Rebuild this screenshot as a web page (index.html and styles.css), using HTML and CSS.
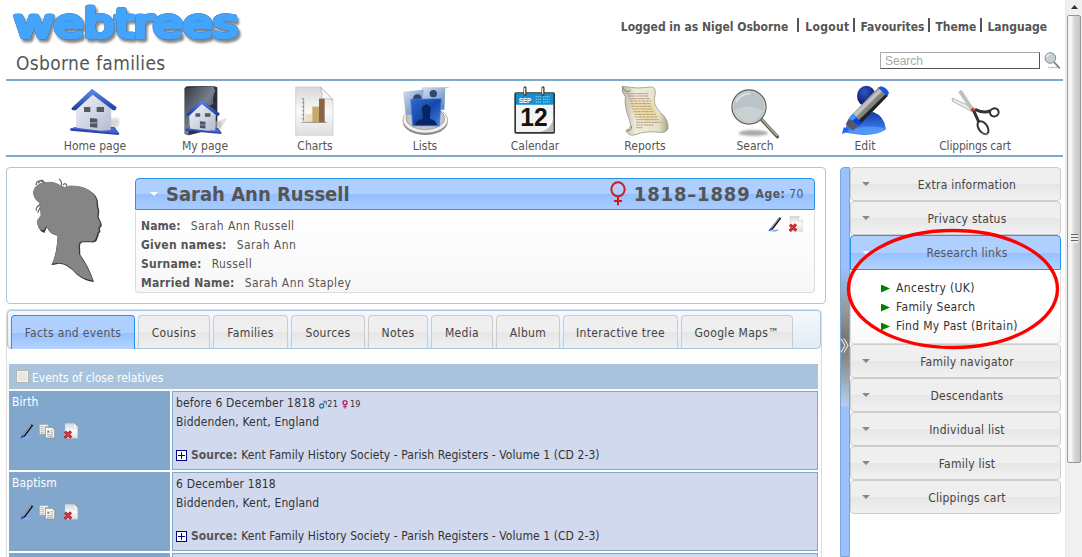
FILE: index.html
```html
<!DOCTYPE html>
<html lang="en">
<head>
<meta charset="utf-8">
<title>Sarah Ann Russell - Osborne families</title>
<link rel="stylesheet" href="styles.css">
</head>
<body>
<svg class="defs" width="0" height="0">
  <defs>
    <linearGradient id="roof" x1="0" y1="0" x2="0" y2="1"><stop offset="0" stop-color="#5f8ff5"/><stop offset="1" stop-color="#1c3aa0"/></linearGradient>
    <linearGradient id="wall" x1="0" y1="0" x2="1" y2="1"><stop offset="0" stop-color="#f2f4fb"/><stop offset="1" stop-color="#b4bccf"/></linearGradient>
    <linearGradient id="dark" x1="0" y1="0" x2="1" y2="1"><stop offset="0" stop-color="#33373f"/><stop offset=".5" stop-color="#77808e"/><stop offset="1" stop-color="#22252b"/></linearGradient>
    <linearGradient id="paper" x1="0" y1="0" x2="0" y2="1"><stop offset="0" stop-color="#d6d6d6"/><stop offset=".5" stop-color="#fafafa"/><stop offset="1" stop-color="#dedede"/></linearGradient>
    <linearGradient id="glass" x1="0" y1="0" x2="1" y2="1"><stop offset="0" stop-color="#2f6ad0"/><stop offset=".5" stop-color="#1748a8"/><stop offset="1" stop-color="#3f86e6"/></linearGradient>
    <linearGradient id="pane" x1="0" y1="0" x2="1" y2="1"><stop offset="0" stop-color="#d5e2f2"/><stop offset="1" stop-color="#4f76b4"/></linearGradient>
    <linearGradient id="scroll" x1="0" y1="0" x2="1" y2="0"><stop offset="0" stop-color="#b9b79c"/><stop offset=".3" stop-color="#efeddb"/><stop offset=".8" stop-color="#e4e1c8"/><stop offset="1" stop-color="#a5a388"/></linearGradient>
    <linearGradient id="barrel" x1="0" y1="0" x2="1" y2="1"><stop offset="0" stop-color="#777"/><stop offset=".4" stop-color="#999"/><stop offset="1" stop-color="#222"/></linearGradient>
    <radialGradient id="head" cx=".4" cy=".3" r=".7"><stop offset="0" stop-color="#3555c8"/><stop offset="1" stop-color="#07125c"/></radialGradient>
    <linearGradient id="suit" x1="0" y1="0" x2="0" y2="1"><stop offset="0" stop-color="#1238a8"/><stop offset="1" stop-color="#4c93ff"/></linearGradient>
    <filter id="soft3" x="-20%" y="-50%" width="140%" height="200%"><feGaussianBlur stdDeviation="3"/></filter>
    <symbol id="house" viewBox="75 18 180 165">
      <path d="M200 120L238 122L236 144L205 165Z" fill="#bbb" opacity=".6" filter="url(#soft3)"/>
      <path d="M90 152L130 140L224 148L237 166L236 171L92 158Z" fill="#2942ac"/>
      <path d="M90 152L130 141L224 150L237 166Z" fill="#4964c4"/>
      <path d="M107 92L157 48L214 92L212 156L182 158L109 149Z" fill="url(#wall)"/>
      <path d="M95 91L156 34L229 88L226 96L219 96L158 49L107 96L97 96Z" fill="url(#roof)" stroke="#26419c" stroke-width="1.5"/>
      <path d="M132 87h19v15h-19zM170 87h22v15h-22z" fill="#515a66"/>
      <path d="M150 120l22 2v27l-22-2z" fill="#4b5666"/><path d="M150 132h22v5h-22z" fill="#8793a5"/>
    </symbol>
    <symbol id="pen" viewBox="0 0 48 48">
      <path d="M10 46Q24 38 38 42L24 47Z" fill="#8fadf0"/>
      <path d="M11 36L37 4l6 3L17 41z" fill="#0a0e18"/><path d="M11 36L35 6l3 1L14 38z" fill="#a5adb8"/>
      <path d="M4 46l6-10 7 5z" fill="#173fd0"/>
    </symbol>
    <symbol id="copy" viewBox="0 0 48 48">
      <path d="M1 4h27v30H1z" fill="#efefef" stroke="#999" stroke-width="2"/><path d="M5 11h9m-9 6h9m-9 6h9m-9 6h9M18 11h8" stroke="#999" stroke-width="2"/>
      <path d="M19 13h20l8 7v25H19z" fill="#f8f8f8" stroke="#8b8b8b" stroke-width="2.5"/><path d="M25 23h6v6h-6z" fill="#777"/><path d="M35 23h7m-7 6h7m-18 6h18m-18 5h18" stroke="#888" stroke-width="2"/>
    </symbol>
    <symbol id="delete" viewBox="0 0 48 48">
      <path d="M6 1h27l11 11v34H6z" fill="url(#paper)" stroke="#c2c2c2" stroke-width="1"/><path d="M32 1v13h12" fill="#fff" stroke="#aaa" stroke-width="1"/>
      <path d="M6 26L25 44M24 25L5 45" stroke="#b02630" stroke-width="9"/><path d="M8 27L23 42M22 27L7 43" stroke="#e03339" stroke-width="4"/>
    </symbol>
  </defs>
</svg>

<div class="window">
<div class="page">
  <header class="header">
    <div class="brand">
      <svg class="logo" viewBox="0 0 248 47" width="248" height="47">
        <defs><linearGradient id="logo" gradientUnits="userSpaceOnUse" x1="0" y1="2" x2="0" y2="40"><stop offset="0" stop-color="#58b4ff"/><stop offset=".6" stop-color="#3f9ffa"/><stop offset="1" stop-color="#2e8aec"/></linearGradient></defs>
        <text class="logo-text" x="14" y="37" textLength="224" lengthAdjust="spacingAndGlyphs">webtrees</text>
      </svg>
      <div class="site-title">Osborne families</div>
    </div>
    <div class="header-right">
      <ul class="user-menu"><li>Logged in as Nigel Osborne</li><li class="logout">Logout</li><li>Favourites</li><li>Theme</li><li>Language</li></ul>
      <div class="search">
        <input class="search-input" type="text" placeholder="Search">
        <svg width="17" height="18" viewBox="0 0 51 54"><path d="M10 44h30v5H12z" fill="#ccc"/><path d="M30 30L47 49" stroke="#77776e" stroke-width="5"/><circle cx="19" cy="18" r="16" fill="#c3cdd2" stroke="#8d9191" stroke-width="3"/><path d="M8 17a12 12 0 0 1 12-10" stroke="#edf2f4" stroke-width="4" fill="none"/></svg>
      </div>
    </div>
  </header>

  <nav class="main-menu">
    <a class="menu-item"><svg class="menu-icon"><use href="#house"/></svg><span>Home page</span></a>
    <a class="menu-item"><svg class="menu-icon" viewBox="405 18 180 165"><path d="M434 30L440 25L520 24L532 28V150L446 172L434 168Z" fill="#2b2e35"/><path d="M434 30L520 24L526 40Q516 58 520 78L470 100L446 150V172L434 168Z" fill="url(#dark)"/><path d="M530 130l32-10-22 35z" fill="#ccc" opacity=".6"/><svg x="424" y="54" width="134" height="123" viewBox="75 18 180 165"><use href="#house" x="75" y="18" width="180" height="165"/></svg></svg><span>My page</span></a>
    <a class="menu-item"><svg class="menu-icon" viewBox="735 18 180 165"><path d="M767 27H842L879 65V172H767Z" fill="url(#paper)" stroke="#bbb" stroke-width="1.5"/><path d="M842 27Q850 48 844 63Q864 60 879 66Z" fill="#f8f8f8" stroke="#aaa" stroke-width="2"/><path d="M797 109h20v24h-20z" fill="#e6e0c6"/><path d="M817 86h20v47h-20z" fill="#c7a96a"/><path d="M837 62h17v71h-17z" fill="#8a6548"/><path d="M791 61v68M785 62h6m-6 12h6m-6 12h6m-6 12h6m-6 12h6m-6 12h6M785 133h76" stroke="#776a60" stroke-width="2"/></svg><span>Charts</span></a>
    <a class="menu-item"><svg class="menu-icon" viewBox="45 18 180 165"><ellipse cx="136" cy="132" rx="67" ry="39" fill="#898989"/><ellipse cx="136" cy="126" rx="67" ry="39" fill="#f2f2f2" stroke="#999" stroke-width="2"/><ellipse cx="136" cy="121" rx="58" ry="34" fill="#c5c5c5" stroke="#888" stroke-width="2"/><path d="M124 28h86l-14 3-3 64h-60z" fill="url(#pane)"/><circle cx="160" cy="47" r="11" fill="#31486f"/><path d="M69 41l62-6-8 76-46-1z" fill="url(#pane)"/><circle cx="112" cy="62" r="13" fill="#2d456f"/><path d="M92 64l92-2-6 82-80-1z" fill="url(#glass)" stroke="#3e82df" stroke-width="2"/><path d="M105 142q3-16 23-20V109q-8-28 11-30 19 2 11 30v13q18 4 22 20z" fill="#0a2466"/></svg><span>Lists</span></a>
    <a class="menu-item"><svg class="menu-icon" viewBox="375 18 180 165"><rect x="403" y="43" width="122" height="124" rx="5" fill="#343434"/><path d="M408 78h112v84H408z" fill="#f4f4f4"/><path d="M408 46h112v34H408z" fill="#168fce"/><path d="M480 161q32-3 40-40v41z" fill="#bbb"/><path d="M478 161q24-12 19-28 13 2 22-12-8 31-41 40z" fill="#fff"/><path d="M467 56h16m6 0h20M467 64h16m6 0h20m-42 8h16m6 0h20" stroke="#74c1e4" stroke-width="4" stroke-dasharray="4 2"/><path d="M435 29v20M489 29v20" stroke="#333" stroke-width="9" stroke-linecap="round"/><path d="M434 29v20M488 29v20" stroke="#ddd" stroke-width="4"/><text x="416" y="75" font-family="Liberation Sans, sans-serif" font-size="19" font-weight="bold" textLength="38" lengthAdjust="spacingAndGlyphs" fill="#fff">SEP</text><text x="421" y="145" font-family="Liberation Sans, sans-serif" font-weight="bold" font-size="76" textLength="82" lengthAdjust="spacingAndGlyphs" fill="#111">12</text></svg><span>Calendar</span></a>
    <a class="menu-item"><svg class="menu-icon" viewBox="705 18 180 165"><path d="M727 25Q772 34 817 27Q829 30 825 51Q816 78 841 103Q867 125 864 152Q857 166 840 163Q800 157 762 171Q745 175 738 157Q756 154 749 128Q732 86 736 56Q723 43 727 25Z" fill="url(#scroll)" stroke="#8a8970" stroke-width="2"/><path d="M727 26Q733 46 752 38M740 158Q756 159 755 143" fill="none" stroke="#85846c" stroke-width="3"/><path d="M752 70l70 5 10 36-27 21-42-23z" fill="#efda85" opacity=".5"/><g stroke="#9c6c58" stroke-width="2" stroke-dasharray="7 1 4 1 9 2"><path d="M739 47h66M744 54h60M748 62h62M749 69h65M752 77h61M754 85h60M757 93h60M760 101h62M763 109h65M764 117h68M768 125h68M768 133h75M768 141h52M769 149h18"/></g></svg><span>Reports</span></a>
    <a class="menu-item"><svg class="menu-icon" viewBox="75 18 180 165"><ellipse cx="160" cy="165" rx="44" ry="9" fill="#aaa" filter="url(#soft3)"/><path d="M184 124L232 176" stroke="#555449" stroke-width="10" stroke-linecap="round"/><path d="M184 123L232 174" stroke="#b9b8a6" stroke-width="4"/><circle cx="147" cy="87" r="51" fill="#bac3c8" stroke="#66665e" stroke-width="4"/><circle cx="147" cy="87" r="48" fill="none" stroke="#e0e0d8" stroke-width="2"/><path d="M104 97Q142 73 189 99Q177 129 146 131Q113 127 104 97Z" fill="#cbd1d3"/><path d="M108 72Q124 46 150 47" fill="none" stroke="#dee5e8" stroke-width="5"/></svg><span>Search</span></a>
    <a class="menu-item"><svg class="menu-icon" viewBox="405 18 180 165"><path d="M437 164Q435 126 468 116L520 102Q554 115 558 154Q529 174 480 170Z" fill="url(#suit)"/><path d="M445 160Q485 138 552 150L551 160Q505 174 445 160Z" fill="#62a5ff" opacity=".6"/><ellipse cx="499" cy="54" rx="28" ry="31" fill="url(#head)"/><path d="M455 111L536 27L564 52L481 139Z" fill="url(#barrel)"/><path d="M460 109L539 32L547 38L468 117Z" fill="#d4d4d4" opacity=".7"/><path d="M473 130L557 49L563 54L481 139Z" fill="#222"/><path d="M534 29L543 25Q562 30 567 45L562 54Z" fill="#1456e2"/><path d="M447 119L459 108L485 135L475 144Z" fill="#0b3fd4"/><path d="M447 119L459 108L469 119L456 129Z" fill="#3b96ff"/><path d="M437 139L447 121L473 144L460 158Z" fill="#56595f"/><path d="M426 168L431 148L444 151L445 160Z" fill="#1e66ef"/></svg><span>Edit</span></a>
    <a class="menu-item"><svg class="menu-icon" viewBox="735 18 180 165"><path d="M756 60L825 91L818 102L758 70Z" fill="#e9e9e9" stroke="#999" stroke-width="2"/><path d="M776 43Q779 35 786 38L822 94L814 99Z" fill="#bfbfbf" stroke="#aaa"/><path d="M825 94Q853 108 871 98" fill="none" stroke="#333" stroke-width="9"/><ellipse cx="883" cy="103" rx="13" ry="12" transform="rotate(-20 883 103)" fill="#fff" stroke="#2f2f2f" stroke-width="6"/><path d="M821 98Q829 116 836 131" fill="none" stroke="#333" stroke-width="9"/><ellipse cx="849" cy="149" rx="13" ry="22" transform="rotate(-35 849 149)" fill="#fff" stroke="#333" stroke-width="6"/><path d="M841 164Q854 174 866 166" stroke="#bbb" fill="none" stroke-width="2"/><circle cx="818" cy="95" r="5" fill="#d22"/></svg><span class="wide">Clippings cart</span></a>
  </nav>

  <div class="columns">
    <main class="main">
      <section class="person">
        <svg class="silhouette" viewBox="90 55 216 315" width="72" height="105"><path d="M110 77Q120 67 140 67Q160 64 178 77L190 82L205 78Q250 76 276 100Q290 114 290 130Q290 143 294 152L292 171L301 192L301 199L296 204L297 216L292 221L292 226L287 239Q284 249 268 247H246Q237 247 236 258L237 284Q264 322 278 366Q250 364 225 343Q198 310 172 311Q158 315 150 315Q165 290 169 227Q143 222 137 201L129 219L119 214Q105 197 109 181L119 167L115 128Q98 119 96 98Q99 83 110 77Z" fill="#3c3c3c" transform="translate(1 1)"/><path d="M108 77Q120 67 140 67Q160 64 178 77L190 82L205 78Q250 76 274 100Q287 114 287 130Q286 143 291 152L289 171L298 192L296 200L292 204L294 214L288 221L288 226L283 239Q280 247 266 245H244Q234 246 233 258L234 284Q261 322 275 362Q250 360 225 340Q198 308 172 309Q162 311 153 312Q168 287 170 227Q143 222 137 199L127 212L119 210Q105 197 109 181L119 167L115 128Q98 119 96 98Q99 83 108 77Z" fill="#858585"/><path d="M105 76Q107 61 119 64L132 70M112 71Q122 52 131 70M174 58Q184 65 181 78M186 76Q194 66 198 80M118 134Q101 145 107 153M118 142L110 159" fill="none" stroke="#707070" stroke-width="4"/></svg>
        <div class="person-info">
          <div class="person-head"><span class="caret white"></span><h1>Sarah Ann Russell</h1><svg class="venus" width="18" height="26" viewBox="0 0 54 78"><g fill="none" stroke="#c91e20" stroke-width="6"><ellipse cx="27" cy="25" rx="20" ry="21"/><path d="M27 46v27M15 60h24"/></g></svg><span class="years">1818–1889</span><span class="age"><b>Age:</b> 70</span></div>
          <div class="person-body">
            <dl>
              <div><dt class="short">Name:</dt><dd>Sarah Ann Russell</dd></div>
              <div><dt>Given names:</dt><dd>Sarah Ann</dd></div>
              <div><dt>Surname:</dt><dd>Russell</dd></div>
              <div><dt>Married Name:</dt><dd>Sarah Ann Stapley</dd></div>
            </dl>
            <div class="tools"><svg class="ico"><use href="#pen"/></svg><svg class="ico"><use href="#delete"/></svg></div>
          </div>
        </div>
      </section>

      <section class="tabs">
        <div class="tab-bar">
          <a class="tab active t1"><span>Facts and events</span></a><a class="tab t2"><span>Cousins</span></a><a class="tab t3"><span>Families</span></a><a class="tab t4"><span>Sources</span></a><a class="tab t5"><span>Notes</span></a><a class="tab t6"><span>Media</span></a><a class="tab t7"><span>Album</span></a><a class="tab t8"><span>Interactive tree</span></a><a class="tab t9"><span>Google Maps™</span></a>
        </div>
        <div class="facts">
          <div class="facts-top"><i class="check"></i><span>Events of close relatives</span></div>
          <div class="fact">
            <div class="fact-label"><span>Birth</span><div class="fact-tools"><svg class="ico"><use href="#pen"/></svg><svg class="ico"><use href="#copy"/></svg><svg class="ico last"><use href="#delete"/></svg></div></div>
            <div class="fact-body"><div class="date"><span>before 6 December 1818</span><svg class="sex" width="8" height="9" viewBox="0 0 24 27"><circle cx="8" cy="18" r="6" fill="none" stroke="#3277a8" stroke-width="4"/><path d="M12 13L21 4M12 4h10v10" fill="none" stroke="#3277a8" stroke-width="3"/></svg><small>21</small><svg class="sex f" width="6" height="9" viewBox="0 0 18 27"><circle cx="9" cy="8" r="6" fill="none" stroke="#b02860" stroke-width="4"/><path d="M9 14v12M3 20h12" stroke="#b02860" stroke-width="3"/></svg><small>19</small></div><div class="place">Biddenden, Kent, England</div><div class="source"><i class="plus"></i><b>Source:</b><span>Kent Family History Society - Parish Registers - Volume 1 (CD 2-3)</span></div></div>
          </div>
          <div class="fact">
            <div class="fact-label"><span>Baptism</span><div class="fact-tools"><svg class="ico"><use href="#pen"/></svg><svg class="ico"><use href="#copy"/></svg><svg class="ico last"><use href="#delete"/></svg></div></div>
            <div class="fact-body"><div class="date"><span>6 December 1818</span></div><div class="place">Biddenden, Kent, England</div><div class="source"><i class="plus"></i><b>Source:</b><span>Kent Family History Society - Parish Registers - Volume 1 (CD 2-3)</span></div></div>
          </div>
          <div class="fact"><div class="fact-label"></div><div class="fact-body"></div></div>
        </div>
      </section>
    </main>

    <div class="splitter"><svg width="8" height="15" viewBox="0 0 8 15"><path d="M0 .5L4 7.5L0 14.5M3 .5L7 7.5L3 14.5" fill="none" stroke="#fff" stroke-width="1"/></svg></div>

    <aside class="sidebar">
      <div class="side-head"><i class="caret"></i><span>Extra information</span></div>
      <div class="side-head"><i class="caret"></i><span>Privacy status</span></div>
      <div class="side-head active"><i class="caret white"></i><span>Research links</span></div>
      <ul class="links"><li>Ancestry (UK)</li><li>Family Search</li><li>Find My Past (Britain)</li></ul>
      <div class="side-head"><i class="caret"></i><span>Family navigator</span></div>
      <div class="side-head"><i class="caret"></i><span>Descendants</span></div>
      <div class="side-head"><i class="caret"></i><span>Individual list</span></div>
      <div class="side-head"><i class="caret"></i><span>Family list</span></div>
      <div class="side-head"><i class="caret"></i><span>Clippings cart</span></div>
      <svg class="highlight" width="214" height="122" viewBox="0 0 214 122"><ellipse cx="107" cy="61" rx="104.5" ry="58.5" fill="none" stroke="#f00" stroke-width="3.4"/></svg>
    </aside>
  </div>
</div>
<div class="scrollbar"><i class="up"></i><div class="thumb"><i class="grip"></i></div></div>
</div>
</body>
</html>
```
FILE: styles.css
```css
* { box-sizing: border-box; }
body { margin: 0; background: #fff; color: #555; font: 12px/19px "DejaVu Sans Condensed", "DejaVu Sans", sans-serif; font-stretch: condensed; white-space: nowrap; }
ul, dl, dd, h1 { margin: 0; padding: 0; list-style: none; }
svg { display: block; flex: none; }
.defs { position: absolute; }
.window { display: flex; height: 557px; overflow: hidden; }
.page { width: 1065px; flex: none; padding-left: 6px; }

.header { height: 81px; width: 1057px; border-bottom: 2px solid #7fa8cc; display: flex; justify-content: space-between; }
.logo { margin-left: -6px; }
.logo-text { font: normal 38.5px "DejaVu Sans", sans-serif; font-stretch: normal; fill: url(#logo); stroke: #44a4fc; stroke-width: 4.4px; stroke-linejoin: round; filter: drop-shadow(0 0 .6px #123f70) drop-shadow(2.5px 3px .8px #888); }
.site-title { font-size: 19px; line-height: 24px; padding: 4px 0 0 10px; letter-spacing: .35px; }
.header-right { display: flex; flex-direction: column; align-items: flex-end; }
.user-menu { display: flex; padding: 18px 16px 0 0; font-weight: bold; }
.user-menu li { line-height: 19px; }
.user-menu li + li::before { content: ""; display: inline-block; width: 2px; height: 14px; background: #555; margin: 0 5px 0 4px; vertical-align: -1px; }
.user-menu li:first-child { margin-right: 5px; }
.user-menu .logout { letter-spacing: .3px; }
.user-menu .logout::before { margin-right: 6px; }
.search { display: flex; gap: 4px; padding: 15px 2px 0 0; }
.search-input { width: 160px; height: 17px; padding: 0 4px; border: 1px solid #555; border-top-color: #aaa; border-left-color: #aaa; font: 12px "Liberation Sans", sans-serif; }
.search-input::placeholder { color: #a9a9a9; }

.main-menu { display: flex; height: 76px; width: 1057px; padding: 3px 0 0 34px; border-bottom: 2px solid #7fa8cc; }
.menu-item { width: 110px; display: flex; flex-direction: column; align-items: center; line-height: 15px; }
.menu-icon { width: 60px; height: 55px; }
.menu-item .wide { letter-spacing: -.2px; }

.columns { display: flex; padding-top: 10px; align-items: flex-start; }
.main { width: 820px; margin-right: 14px; }
.person { height: 137px; border: 1px solid #a9c6de; border-radius: 4px; display: flex; padding: 10px 10px 0 24px; }
.person-info { width: 680px; margin-left: 32px; }
.person-head { height: 32px; border: 1px solid #2694e8; border-radius: 4px 4px 0 0; background: linear-gradient(#afcfff 50%, #94bfff 50%, #a5caff 90%); display: flex; align-items: center; padding: 0 10px 0 14px; }
.person-head h1 { font-size: 20px; line-height: 30px; margin-left: 8px; flex: 1; }
.venus { margin-right: 7px; }
.years { font-size: 20px; font-weight: bold; letter-spacing: .85px; }
.age { margin-left: 5px; letter-spacing: .5px; }
.person-body { height: 82px; border: 1px solid #ddd; border-top: 0; border-radius: 0 0 4px 4px; margin-top: 1px; background: linear-gradient(#fff, #f7f7f7); display: flex; justify-content: space-between; padding: 6px 10px 0 5px; }
.person-body dl > div { display: flex; }
.person-body dt { font-weight: bold; margin-right: 10px; letter-spacing: .25px; }
.person-body dt.short { letter-spacing: .1px; }
.person-body dd { letter-spacing: .4px; }
.tools { display: flex; gap: 5px; margin-top: -1px; }
.ico { width: 16px; height: 16px; }
.caret { width: 8px; height: 4px; background: #888; clip-path: polygon(0 0, 100% 0, 50% 100%); flex: none; }
.caret.white { background: #fff; }

.tabs { margin-top: 5px; width: 816px; height: 260px; border: 1px solid #ddd; border-radius: 4px; background: linear-gradient(#fff 40px, #f8f8f8 75px, #fff 110px); }
.tab-bar { height: 39px; border: 1px solid #a9c6de; border-radius: 4px; background: linear-gradient(#f5f9fd, #e1ecf4); padding: 4px 0 0 3px; display: flex; gap: 3px; }
.tab { height: 33px; border: 1px solid #ccc; border-bottom: 0; border-radius: 4px 4px 0 0; background: linear-gradient(#efefef 50%, #e6e6e6 50%, #f0f0f0); color: #444; text-align: center; line-height: 34px; letter-spacing: .35px; }
.tab.active { height: 34px; border-color: #2694e8; background: linear-gradient(#afcfff 50%, #94bfff 50%, #b5d4ff); color: #555; }
.t1 { width: 124px; } .t2 { width: 72px; } .t3 { width: 75px; } .t4 { width: 74px; } .t5 { width: 60px; } .t6 { width: 62px; } .t7 { width: 64px; } .t8 { width: 115px; } .t9 { width: 112px; }

.facts { margin: 15px 3px 0 2px; display: grid; gap: 2px; color: #333; }
.facts-top { height: 25px; background: #a9c3dc; color: #fff; display: flex; align-items: center; padding: 4px 0 0 7px; gap: 3px; }
.check { width: 13px; height: 13px; background: #e6e6e6; border: 2px solid #f5f5f5; outline: 1px solid #b5b5b0; outline-offset: -1px; margin-top: -5px; }
.fact { height: 79px; display: grid; grid-template-columns: 161px 1fr; gap: 2px; }
.fact-label { background: #81a7cd; color: #fff; padding: 2px 3px; letter-spacing: .1px; }
.fact-tools { display: flex; gap: 4px; padding: 11px 0 0 7px; }
.fact-tools .last { margin-left: 4px; }
.fact-body { background: #d1d9ee; border: 1px solid #81a7cd; padding: 2px 3px; }
.date { display: flex; height: 19px; letter-spacing: .18px; }
.place { letter-spacing: .15px; }
.date small { font-size: 9px; line-height: 21px; }
.sex { margin: 6px 0 0 4px; }
.sex.f { margin-right: 2px; }
.source { display: flex; align-items: center; padding-top: 14px; gap: 4px; letter-spacing: .07px; }
.source b { color: #555; letter-spacing: 0; }
.plus { width: 11px; height: 11px; border: 1px solid #000080; background: linear-gradient(#000080, #000080) center/7px 1px no-repeat, linear-gradient(#000080, #000080) center/1px 7px no-repeat, #fff; }

.splitter { width: 10px; height: 390px; border: 1px solid #79a7d4; border-radius: 4px 0 0 0; background: linear-gradient(#9ac0ff 100px, #999 142px, #777 170px, #888 190px, #b5ceef 237px, #9ac0ff 240px); padding-top: 170px; }

.sidebar { width: 211px; position: relative; }
.side-head { height: 34px; border: 1px solid #ccc; border-radius: 4px; background: linear-gradient(#efefef 50%, #e6e6e6 50%, #f1f1f1); color: #444; display: flex; align-items: center; padding-left: 11px; }
.side-head span { flex: 1; text-align: center; padding: 2px 0 0 4px; letter-spacing: .25px; }
.side-head.active { height: 35px; border-color: #2694e8; border-radius: 4px 4px 0 0; background: linear-gradient(#afcfff 50%, #94bfff 50%, #b5d4ff); color: #555; }
.links { height: 73px; margin-top: 1px; border: 1px solid #ddd; border-top: 0; border-radius: 0 0 4px 4px; background: linear-gradient(#fff 60%, #f8f8f8); padding: 8px 0 0 30px; color: #333; letter-spacing: .34px; }
.links li { display: flex; align-items: center; gap: 6px; }
.links li::before { content: ""; width: 9px; height: 8px; background: #008000; clip-path: polygon(0 0, 100% 50%, 0 100%); }
.highlight { position: absolute; left: -4px; top: 61px; }

.scrollbar { width: 17px; background: #f0f0f0; padding: 5px 1px 0; border-left: 1px solid #e8e8e8; }
.up { display: block; width: 7px; height: 4px; margin: 0 0 6px 4px; background: #333; clip-path: polygon(50% 0, 100% 100%, 0 100%); }
.thumb { width: 14px; height: 448px; border: 1px solid #989898; border-radius: 2px; background: linear-gradient(90deg, #f5f5f5 30%, #d8d8dc 50%, #c4c4ca); padding: 218px 0 0 3px; }
.grip { display: block; width: 7px; height: 9px; background: repeating-linear-gradient(#666 0 1px, #eee 1px 3px); }
```
